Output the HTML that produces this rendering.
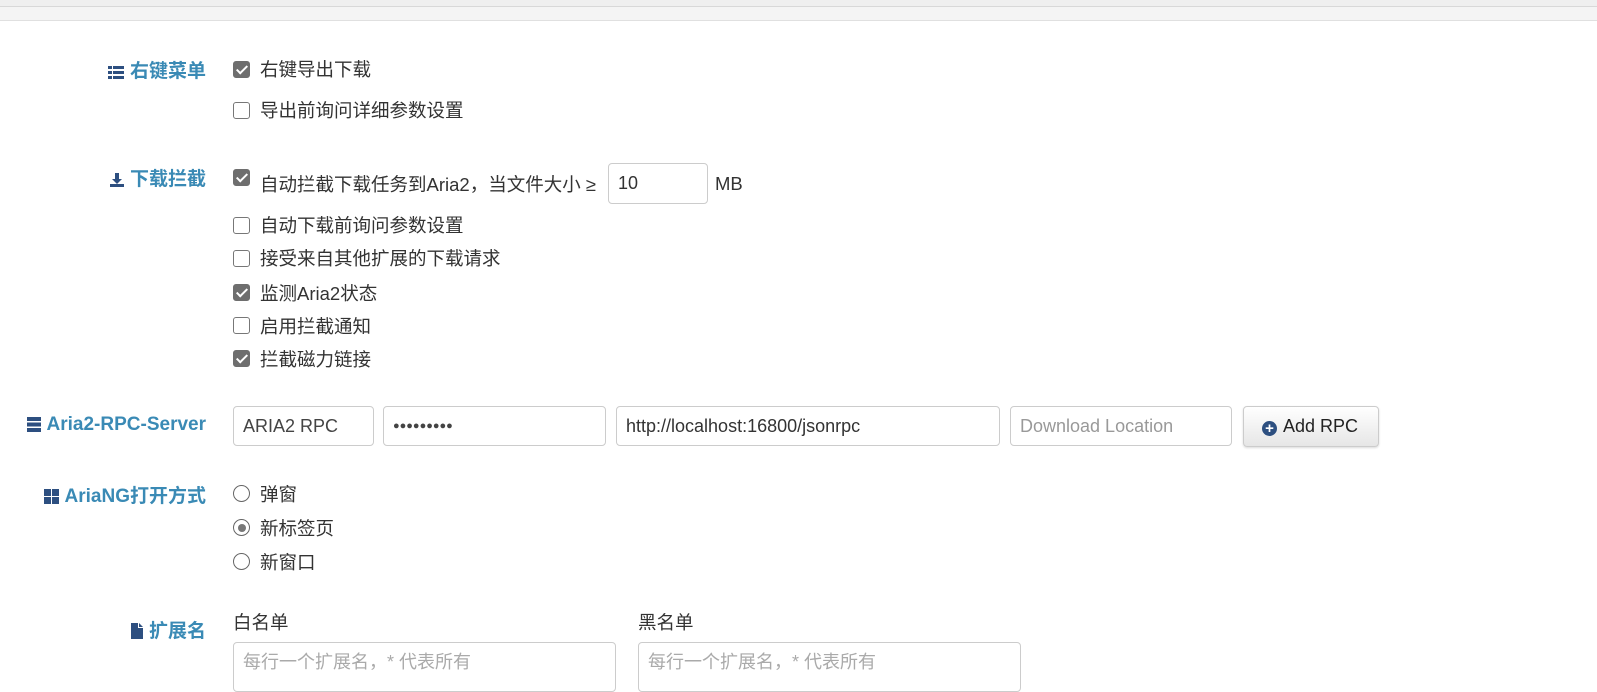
<!DOCTYPE html>
<html><head><meta charset="utf-8"><style>
body{margin:0;width:1597px;height:676px;overflow:hidden;background:#fff;font-family:"Liberation Sans","Noto Sans CJK SC",sans-serif;font-size:18.5px;color:#333;position:relative}
.top1{position:absolute;left:0;top:0;width:1597px;height:6px;background:#efefef;border-bottom:1px solid #d8d8d8}
.top2{position:absolute;left:0;top:7px;width:1597px;height:13px;background:#f4f4f4;border-bottom:1px solid #e0e0e0}
.a{position:absolute;white-space:nowrap}
.lbl{position:absolute;right:1391px;font-weight:bold;color:#3a8ab5;white-space:nowrap;font-size:19px}
.lbl svg{vertical-align:-2px;margin-right:6px}
.cb{position:absolute;left:233px;width:15px;height:15px;border:1px solid #777;border-radius:3px;background:#fff}
.cb.on{background:#6e6e6e;border-color:#6e6e6e}
.cb.on:after{content:"";position:absolute;left:5px;top:1px;width:4px;height:9px;border:solid #fff;border-width:0 2px 2px 0;transform:rotate(45deg)}
.rd{position:absolute;left:233px;width:15px;height:15px;border:1px solid #666;border-radius:50%;background:#fff}
.rd.on:after{content:"";position:absolute;left:3.5px;top:3.5px;width:8px;height:8px;border-radius:50%;background:#777}
.t{position:absolute;left:260px;white-space:nowrap}
.in{position:absolute;height:40px;border:1px solid #ccc;border-radius:4px;box-sizing:border-box;padding:0 9px;line-height:38px;font-size:18px;white-space:nowrap;overflow:hidden}
</style></head><body>
<div class="top1"></div><div class="top2"></div>

<div class="lbl" style="top:56px"><svg width="16" height="13" viewBox="0 0 16 13"><g fill="#2d4f80"><rect x="0" y="0" width="4" height="3"/><rect x="5" y="0" width="11" height="3"/><rect x="0" y="5" width="4" height="3"/><rect x="5" y="5" width="11" height="3"/><rect x="0" y="10" width="4" height="3"/><rect x="5" y="10" width="11" height="3"/></g></svg>右键菜单</div>
<div class="cb on" style="top:61px"></div><div class="t" style="top:56px">右键导出下载</div>
<div class="cb" style="top:102px"></div><div class="t" style="top:97px">导出前询问详细参数设置</div>

<div class="lbl" style="top:164px"><svg width="14" height="14" viewBox="0 0 14 14"><g fill="#2d4f80"><rect x="5" y="0" width="4" height="6"/><path d="M2 6h10l-5 5z"/><rect x="0" y="11" width="14" height="3"/></g></svg>下载拦截</div>
<div class="cb on" style="top:169px"></div><div class="t" style="top:171px">自动拦截下载任务到Aria2，当文件大小 ≥</div>
<div class="in" style="left:608px;top:163px;width:100px;height:41px;line-height:39px">10</div>
<div class="a" style="left:715px;top:173px">MB</div>
<div class="cb" style="top:217px"></div><div class="t" style="top:212px">自动下载前询问参数设置</div>
<div class="cb" style="top:250px"></div><div class="t" style="top:245px">接受来自其他扩展的下载请求</div>
<div class="cb on" style="top:284px"></div><div class="t" style="top:280px">监测Aria2状态</div>
<div class="cb" style="top:317px"></div><div class="t" style="top:313px">启用拦截通知</div>
<div class="cb on" style="top:350px"></div><div class="t" style="top:346px">拦截磁力链接</div>

<div class="lbl" style="top:414px"><svg width="14" height="15" viewBox="0 0 14 15"><g fill="#2d4f80"><rect x="0" y="0" width="14" height="4"/><rect x="0" y="5.5" width="14" height="4"/><rect x="0" y="11" width="14" height="4"/></g></svg>Aria2-RPC-Server</div>
<div class="in" style="left:233px;top:406px;width:141px;color:#444">ARIA2 RPC</div>
<div class="in" style="left:383px;top:406px;width:223px;font-size:11px;letter-spacing:0px;color:#444">●●●●●●●●●</div>
<div class="in" style="left:616px;top:406px;width:384px">http://localhost:16800/jsonrpc</div>
<div class="in" style="left:1010px;top:406px;width:222px;color:#999">Download Location</div>
<div class="in" style="left:1243px;top:406px;width:136px;height:41px;line-height:39px;background:linear-gradient(#fff,#e6e6e6);box-shadow:0 1px 2px rgba(0,0,0,.15);padding:0 0 0 18px;color:#222"><span style="display:inline-block;width:15px;height:15px;border-radius:50%;background:#2d4f80;color:#fff;font-size:15px;line-height:15px;text-align:center;font-weight:bold;vertical-align:-1px;margin-right:6px">+</span>Add RPC</div>

<div class="lbl" style="top:481px"><svg width="15" height="15" viewBox="0 0 15 15"><g fill="#2d4f80"><rect x="0" y="0" width="7" height="7"/><rect x="8" y="0" width="7" height="7"/><rect x="0" y="8" width="7" height="7"/><rect x="8" y="8" width="7" height="7"/></g></svg>AriaNG打开方式</div>
<div class="rd" style="top:485px"></div><div class="t" style="top:481px">弹窗</div>
<div class="rd on" style="top:519px"></div><div class="t" style="top:515px">新标签页</div>
<div class="rd" style="top:553px"></div><div class="t" style="top:549px">新窗口</div>

<div class="lbl" style="top:616px"><svg width="12" height="16" viewBox="0 0 12 16"><path fill="#2d4f80" d="M0 0h7v5h5v11H0z M8 0l4 4H8z"/></svg>扩展名</div>
<div class="a" style="left:233px;top:609px">白名单</div>
<div class="a" style="left:638px;top:609px">黑名单</div>
<div class="in" style="left:233px;top:642px;width:383px;height:50px;color:#aaa">每行一个扩展名，* 代表所有</div>
<div class="in" style="left:638px;top:642px;width:383px;height:50px;color:#aaa">每行一个扩展名，* 代表所有</div>
</body></html>
